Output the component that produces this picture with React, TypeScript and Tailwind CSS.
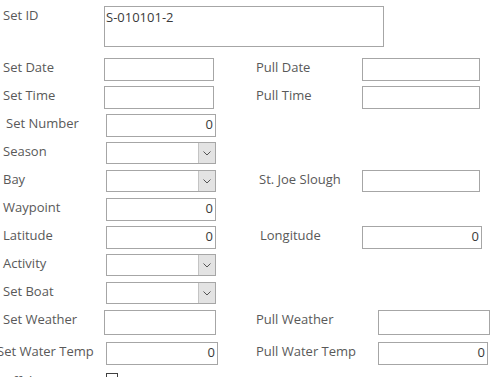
type BoxProps = {
  className: string;
  value?: string;
  align?: "left" | "right";
  combo?: boolean;
};

function Box({ className, value, align = "right", combo }: BoxProps) {
  return (
    <div className={`flex border border-[#a6a6a6] bg-white ${className}`}>
      {combo ? (
        <>
          <div className="flex-1" />
          <div className="flex w-[17px] items-center justify-center border-l border-[#c4c4c4] bg-[#e3e3e3]">
            <svg width="8" height="5" viewBox="0 0 8 5" fill="none">
              <polyline points="0.5,0.5 4,4 7.5,0.5" stroke="#555" strokeWidth="1" />
            </svg>
          </div>
        </>
      ) : (
        <div
          className={`flex-1 text-[13px] leading-4 text-[#3a3a3a] ${
            align === "left" ? "pl-px pt-[2px] text-left" : "pr-[2px] pt-px text-right"
          }`}
        >
          {value}
        </div>
      )}
    </div>
  );
}

const label = "pt-px text-[13px] leading-4 text-[#595959] whitespace-nowrap";

export default function App() {
  return (
    <div className="h-[377px] w-[495px] overflow-hidden bg-white font-['Open_Sans',sans-serif]">
      {/* Set ID */}
      <div className="mt-[6px] flex items-start">
        <div className={`w-[104px] pl-[3px] ${label}`}>Set ID</div>
        <Box className="h-[41px] w-[280px]" value="S-010101-2" align="left" />
      </div>

      {/* Set Date / Pull Date */}
      <div className="mt-[11px] flex items-start">
        <div className="flex w-[256px] items-start">
          <div className={`w-[104px] pl-[3px] ${label}`}>Set Date</div>
          <Box className="h-[23px] w-[110px]" />
        </div>
        <div className={`w-[106px] ${label}`}>Pull Date</div>
        <Box className="h-[23px] w-[118px]" />
      </div>

      {/* Set Time / Pull Time */}
      <div className="mt-[5px] flex items-start">
        <div className="flex w-[256px] items-start">
          <div className={`w-[104px] pl-[3px] ${label}`}>Set Time</div>
          <Box className="h-[23px] w-[110px]" />
        </div>
        <div className={`w-[106px] ${label}`}>Pull Time</div>
        <Box className="h-[23px] w-[118px]" />
      </div>

      {/* Set Number */}
      <div className="mt-[5px] flex items-start">
        <div className={`w-[106px] pl-[6px] ${label}`}>Set Number</div>
        <Box className="h-[23px] w-[110px]" value="0" />
      </div>

      {/* Season */}
      <div className="mt-[5px] flex items-start">
        <div className={`w-[106px] pl-[3px] ${label}`}>Season</div>
        <Box className="h-[22px] w-[110px]" combo />
      </div>

      {/* Bay / St. Joe Slough */}
      <div className="mt-[6px] flex items-start">
        <div className="flex w-[256px] items-start">
          <div className={`w-[106px] pl-[3px] ${label}`}>Bay</div>
          <Box className="h-[22px] w-[110px]" combo />
        </div>
        <div className={`w-[106px] pl-[3px] ${label}`}>St. Joe Slough</div>
        <Box className="h-[22px] w-[118px]" />
      </div>

      {/* Waypoint */}
      <div className="mt-[6px] flex items-start">
        <div className={`w-[106px] pl-[3px] ${label}`}>Waypoint</div>
        <Box className="h-[23px] w-[110px]" value="0" />
      </div>

      {/* Latitude / Longitude */}
      <div className="mt-[5px] flex items-start">
        <div className="flex w-[256px] items-start">
          <div className={`w-[106px] pl-[3px] ${label}`}>Latitude</div>
          <Box className="h-[23px] w-[110px]" value="0" />
        </div>
        <div className={`w-[106px] pl-[4px] ${label}`}>Longitude</div>
        <Box className="h-[23px] w-[120px]" value="0" />
      </div>

      {/* Activity */}
      <div className="mt-[5px] flex items-start">
        <div className={`w-[106px] pl-[3px] ${label}`}>Activity</div>
        <Box className="h-[22px] w-[110px]" combo />
      </div>

      {/* Set Boat */}
      <div className="mt-[6px] flex items-start">
        <div className={`w-[106px] pl-[3px] ${label}`}>Set Boat</div>
        <Box className="h-[22px] w-[110px]" combo />
      </div>

      {/* Set Weather / Pull Weather */}
      <div className="mt-[6px] flex items-start">
        <div className="flex w-[256px] items-start">
          <div className={`w-[104px] pl-[3px] ${label}`}>Set Weather</div>
          <Box className="h-[25px] w-[112px]" />
        </div>
        <div className={`w-[122px] ${label}`}>Pull Weather</div>
        <Box className="h-[25px] w-[112px]" />
      </div>

      {/* Set Water Temp / Pull Water Temp */}
      <div className="mt-[7px] flex items-start">
        <div className="flex w-[256px] items-start">
          <div className={`-ml-[3px] w-[109px] ${label}`}>Set Water Temp</div>
          <Box className="h-[23px] w-[112px]" value="0" />
        </div>
        <div className={`w-[122px] ${label}`}>Pull Water Temp</div>
        <Box className="h-[23px] w-[110px]" value="0" />
      </div>

      {/* Offal */}
      <div className="mt-[7px] flex items-start">
        <div className={`w-[106px] pl-[3px] pt-[2px] ${label}`}>Offal</div>
        <div className="mt-px h-[12px] w-[12px] border border-[#404040] bg-white" />
      </div>
    </div>
  );
}
